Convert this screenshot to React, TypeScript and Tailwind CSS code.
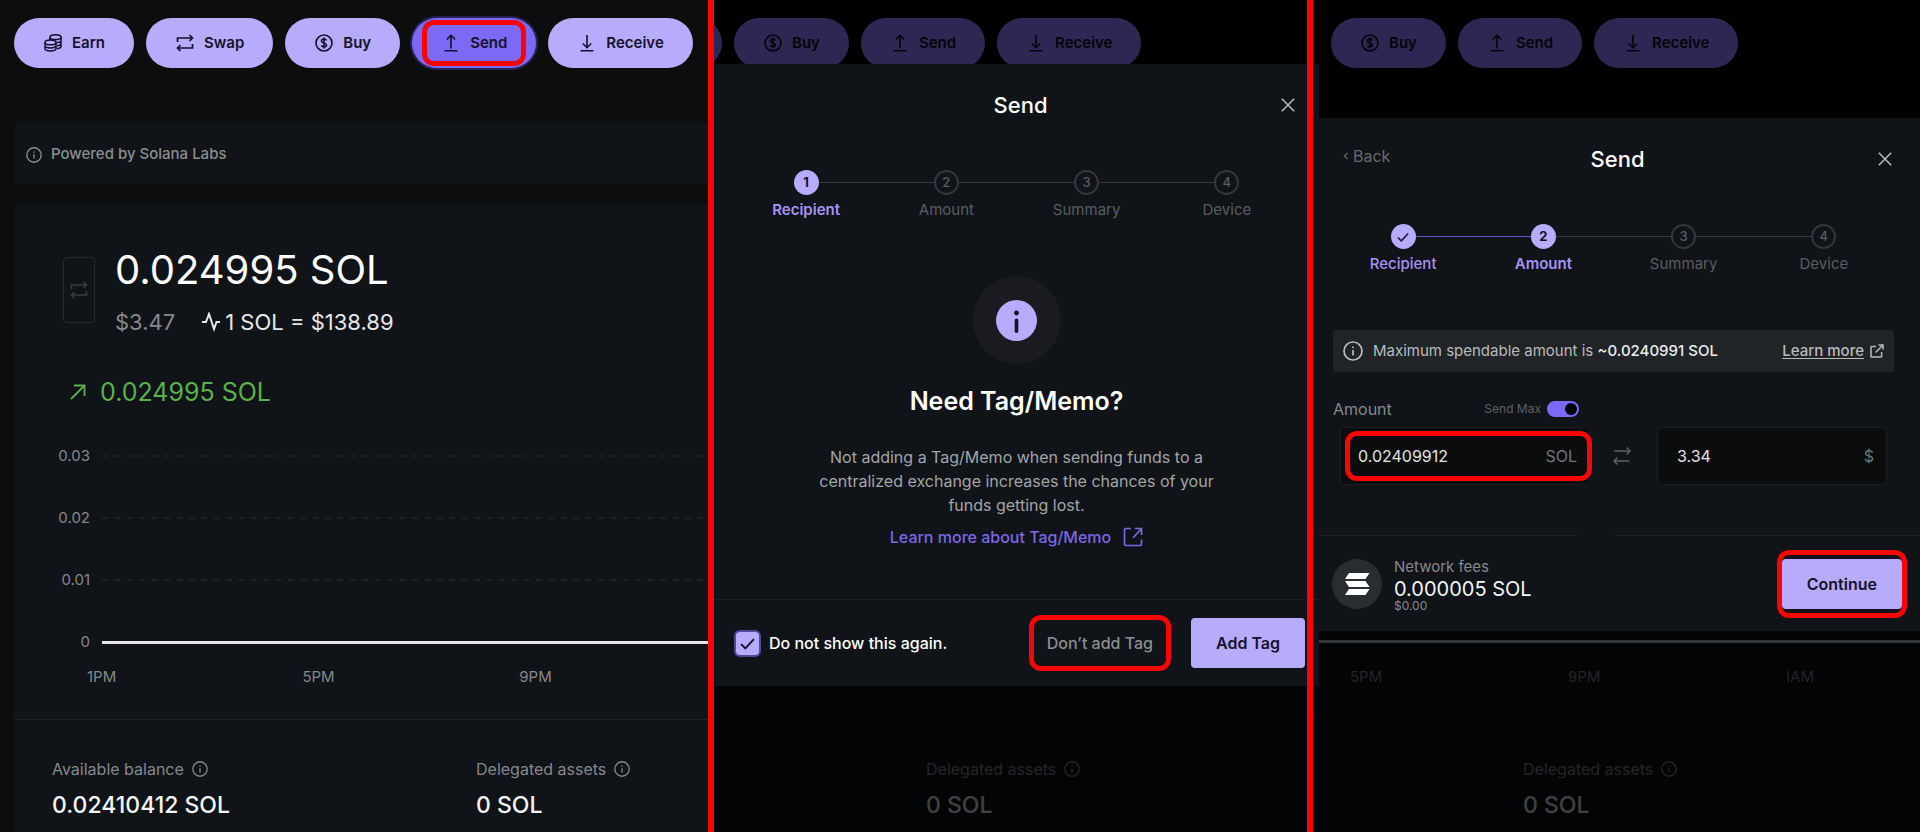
import { useState } from "react";

type IconProps = { className?: string };

const EarnIcon = ({ className }: IconProps) => (
    <svg viewBox="0 0 20 20" fill="none" stroke="currentColor" strokeWidth="1.5" className={className}>
        <ellipse cx="12.5" cy="4.2" rx="5.5" ry="2.4" />
        <path d="M7 4.2v3M18 4.2v9c0 1.3-1.6 2.2-4 2.4M18 7.4c0 1.2-1.6 2-4 2.2M18 10.5c0 1.2-1.6 2-4 2.2" />
        <ellipse cx="7.5" cy="9.4" rx="5.5" ry="2.4" />
        <path d="M2 9.4v6.2C2 17 4.5 18 7.5 18s5.5-1 5.5-2.4V9.4M2 12.5c0 1.4 2.5 2.4 5.5 2.4s5.5-1 5.5-2.4" />
    </svg>
);

const SwapIcon = ({ className }: IconProps) => (
    <svg viewBox="0 0 20 20" fill="none" stroke="currentColor" strokeWidth="1.7" className={className}>
        <path d="M2.5 9V5h15M14.5 2l3 3-3 3M17.5 11v4h-15M5.5 12l-3 3 3 3" />
    </svg>
);

const BuyIcon = ({ className }: IconProps) => (
    <svg viewBox="0 0 20 20" fill="none" stroke="currentColor" strokeWidth="1.6" className={className}>
        <circle cx="10" cy="10" r="8" />
        <path d="M12.5 7.5c-.4-1-1.3-1.5-2.5-1.5-1.5 0-2.5.8-2.5 1.9 0 2.8 5 1.4 5 4.2 0 1.1-1 1.9-2.5 1.9-1.3 0-2.2-.6-2.6-1.6M10 4.6v10.8" />
    </svg>
);

const SendIcon = ({ className }: IconProps) => (
    <svg viewBox="0 0 20 20" fill="none" stroke="currentColor" strokeWidth="1.6" className={className}>
        <path d="M10 15.5v-13M5.8 6.5L10 2.3l4.2 4.2M3.5 17.8h13" />
    </svg>
);

const ReceiveIcon = ({ className }: IconProps) => (
    <svg viewBox="0 0 20 20" fill="none" stroke="currentColor" strokeWidth="1.6" className={className}>
        <path d="M10 2v12.5M5.8 10.5l4.2 4.2 4.2-4.2M3.5 17.8h13" />
    </svg>
);

const InfoIcon = ({ className }: IconProps) => (
    <svg viewBox="0 0 20 20" fill="none" stroke="currentColor" strokeWidth="1.7" className={className}>
        <circle cx="10" cy="10" r="9" />
        <path d="M10 9v5.5M10 5.5v1.8" />
    </svg>
);

const CloseIcon = ({ className }: IconProps) => (
    <svg viewBox="0 0 14 14" fill="none" stroke="currentColor" strokeWidth="1.6" className={className}>
        <path d="M.8.8l12.4 12.4M13.2.8L.8 13.2" />
    </svg>
);

const CheckIcon = ({ className }: IconProps) => (
    <svg viewBox="0 0 14 14" fill="none" stroke="currentColor" strokeWidth="1.7" className={className}>
        <path d="M1 7.5l4 4L13 3" />
    </svg>
);

const ExternalIcon = ({ className }: IconProps) => (
    <svg viewBox="0 0 20 20" fill="none" stroke="currentColor" strokeWidth="1.7" className={className}>
        <path d="M8 1.5H3A1.5 1.5 0 0 0 1.5 3v14A1.5 1.5 0 0 0 3 18.5h14a1.5 1.5 0 0 0 1.5-1.5v-4.5M12 1.5h6.5V8M18.5 1.5L10 11" />
    </svg>
);

const OpenIcon = ({ className }: IconProps) => (
    <svg viewBox="0 0 14 14" fill="none" stroke="currentColor" strokeWidth="1.5" className={className}>
        <path d="M6 2.5H1.8A.8.8 0 0 0 1 3.3v9c0 .4.4.8.8.8h9c.4 0 .8-.4.8-.8V8M8.5 1H13v4.5M13 1L5.5 8.5" />
    </svg>
);

const actions = [
    { label: "Earn", Icon: EarnIcon },
    { label: "Swap", Icon: SwapIcon },
    { label: "Buy", Icon: BuyIcon },
    { label: "Send", Icon: SendIcon },
    { label: "Receive", Icon: ReceiveIcon },
];

// Red frame around the control the user has to click
const Highlight = ({ className }: IconProps) => (
    <span className={`pointer-events-none absolute rounded-xl border-[5px] border-[#f80505] ${className}`} />
);

type ActionBarProps = { items: typeof actions; active?: string; dimmed?: boolean };

function ActionBar({ items, active, dimmed }: ActionBarProps) {
    return (
        <nav className="flex h-[50px] shrink-0 gap-3">
            {items.map(({ label, Icon }) => (
                <button
                    key={label}
                    className={`relative flex shrink-0 items-center gap-[9px] rounded-full px-[29px] text-[15px] font-semibold ${
                        dimmed
                            ? "bg-[#2f2753] text-[#050409]"
                            : active === label
                              ? "bg-[#7c6af6] text-[#15112b] ring-2 ring-[#2a2358]"
                              : "bg-[#b7abfd] text-[#15112b]"
                    }`}
                >
                    <Icon className="size-5" />
                    {label}
                    {active === label && <Highlight className="inset-x-2.5 inset-y-0.5" />}
                </button>
            ))}
        </nav>
    );
}

type BalanceProps = { label: string; value: string };

function Balance({ label, value }: BalanceProps) {
    return (
        <div>
            <div className="flex h-6 items-center gap-2 text-base text-[#85888c]">
                {label}
                <InfoIcon className="size-4" />
            </div>
            <div className="mt-2 text-[23px] leading-8 font-medium text-[#f2f3f4]">{value}</div>
        </div>
    );
}

type StepperProps = { current: number };

function Stepper({ current }: StepperProps) {
    const steps = ["Recipient", "Amount", "Summary", "Device"];

    return (
        <ol className="grid grid-cols-4">
            {steps.map((step, i) => {
                const reached = i + 1 <= current;
                return (
                    <li key={step} className="flex flex-col items-center gap-[5px]">
                        <div className="flex w-full items-center">
                            <span
                                className={`h-px flex-1 ${
                                    i === 0 ? "bg-transparent" : reached ? "bg-[#6a57c8]" : "bg-[#36393c]"
                                }`}
                            />
                            <span
                                className={`flex size-[25px] items-center justify-center rounded-full text-[13px] ${
                                    reached
                                        ? "bg-[#b7abfd] font-bold text-[#15112b]"
                                        : "border-2 border-[#34373a] font-medium text-[#5a5d60]"
                                }`}
                            >
                                {i + 1 < current ? <CheckIcon className="size-3" /> : i + 1}
                            </span>
                            <span
                                className={`h-px flex-1 ${
                                    i === 3 ? "bg-transparent" : i + 1 < current ? "bg-[#6a57c8]" : "bg-[#36393c]"
                                }`}
                            />
                        </div>
                        <span
                            className={`text-[15px] leading-5 ${
                                i + 1 === current
                                    ? "font-semibold text-[#a594f5]"
                                    : reached
                                      ? "font-medium text-[#a594f5]"
                                      : "text-[#5a5d60]"
                            }`}
                        >
                            {step}
                        </span>
                    </li>
                );
            })}
        </ol>
    );
}

function DialogTitle({ back }: { back?: boolean }) {
    return (
        <header className="grid h-10 grid-cols-3 items-center pr-0.5 pl-2.5">
            <div>
                {back && (
                    <button className="flex items-center gap-1 pb-1.5 text-base text-[#686b6e]">
                        <svg viewBox="0 0 6 10" fill="none" stroke="currentColor" strokeWidth="1.5" className="h-2 w-1.5">
                            <path d="M5 1L1 5l4 4" />
                        </svg>
                        Back
                    </button>
                )}
            </div>
            <h2 className="text-center text-[22px] font-medium text-white">Send</h2>
            <button aria-label="Close" className="justify-self-end text-[#b4b6b8]">
                <CloseIcon className="size-3.5" />
            </button>
        </header>
    );
}

function AccountPanel() {
    const rows = ["0.03", "0.02", "0.01"];
    const hours = ["1PM", "5PM", "9PM"];

    return (
        <section className="relative flex flex-col overflow-hidden bg-[#0c0e0d] pt-[18px] pl-3.5">
            <ActionBar items={actions} active="Send" />
            <div className="mt-[55px] flex h-[61px] items-center gap-[9px] rounded-l bg-[#101317] pt-0.5 pl-3 text-[15px] font-medium text-[#8b8e92]">
                <InfoIcon className="size-4" />
                Powered by Solana Labs
            </div>
            <div className="mt-5 flex-1 rounded-l bg-[#101317]">
                <div className="flex gap-5 pt-[42px] pl-[49px]">
                    <button
                        aria-label="Swap currency"
                        className="mt-[11px] flex h-[66px] w-8 items-center justify-center rounded border border-[#26292d] text-[#3a3d41]"
                    >
                        <SwapIcon className="size-5" />
                    </button>
                    <div>
                        <h1 className="text-[40px] leading-[48px] text-white">0.024995 SOL</h1>
                        <p className="mt-3 flex items-center text-[22px] leading-8 text-[#e6e7e9]">
                            <span className="text-[#85888e]">$3.47</span>
                            <svg
                                viewBox="0 0 20 20"
                                fill="none"
                                stroke="currentColor"
                                strokeWidth="2"
                                className="mr-1 ml-[26px] size-5"
                            >
                                <path d="M1 10h4l3-8 5 15 2.500-7H19" />
                            </svg>
                            1 SOL = $138.89
                        </p>
                    </div>
                </div>
                <p className="mt-[38px] flex items-center gap-3.5 pl-[56px] text-[25px] leading-8 text-[#5cb04c]">
                    <svg viewBox="0 0 16 16" fill="none" stroke="currentColor" strokeWidth="1.8" className="size-4">
                        <path d="M1 15L14 2M4 1.500h10.500V12" />
                    </svg>
                    0.024995 SOL
                </p>
                <div className="mt-[17px] flex flex-col text-[15px] text-[#85888c]">
                    {rows.map((row) => (
                        <div key={row} className="flex h-[62px] items-center">
                            <span className="w-[76px] text-right">{row}</span>
                            <svg className="ml-3 h-0.5 flex-1">
                                <path d="M0 1h900" stroke="#202428" strokeWidth="1.5" strokeDasharray="6 6.4" />
                            </svg>
                        </div>
                    ))}
                    <div className="flex h-[62px] items-center">
                        <span className="w-[76px] text-right">0</span>
                        <span className="ml-3 h-[3px] flex-1 bg-[#e8e8ea]" />
                    </div>
                    <div className="-mt-2 flex h-6 items-center">
                        {hours.map((hour, i) => (
                            <span key={hour} className={i === 0 ? "w-[196px] pl-[73px]" : "w-[217px] text-center"}>
                                {hour}
                            </span>
                        ))}
                    </div>
                </div>
                <div className="mt-[30px] grid grid-cols-[424px_1fr] border-t border-[#202327] pt-[37px] pl-[38px]">
                    <Balance label="Available balance" value="0.02410412 SOL" />
                    <Balance label="Delegated assets" value="0 SOL" />
                </div>
            </div>
            <div className="absolute inset-y-0 right-0 w-1.5 bg-[#fb0404]" />
        </section>
    );
}

function MemoPanel() {
    const [hide, setHide] = useState(true);

    return (
        <section className="relative flex flex-col overflow-hidden bg-black">
            <div className="flex h-16 shrink-0 gap-3 overflow-hidden pt-[18px]">
                {/* end of the button that is scrolled out of view */}
                <div className="flex h-[50px] w-2 justify-end overflow-hidden">
                    <span className="w-24 shrink-0 rounded-full bg-[#2f2753]" />
                </div>
                <ActionBar items={actions.slice(2)} dimmed />
            </div>
            <div className="flex flex-col bg-[#101317] pt-[21px]">
                <div className="px-[22px]">
                    <DialogTitle />
                    <div className="mt-[45px]">
                        <Stepper current={1} />
                    </div>
                    <div className="mt-14 flex flex-col items-center text-center">
                        <div className="flex size-[88px] items-center justify-center rounded-full bg-[#191b20]">
                            <svg viewBox="0 0 41 41" className="size-[41px]">
                                <circle cx="20.5" cy="20.5" r="20.5" fill="#b7abfd" />
                                <circle cx="20.5" cy="13" r="2.4" fill="#15112b" />
                                <rect x="18.7" y="18.5" width="3.6" height="14.5" rx="1.8" fill="#15112b" />
                            </svg>
                        </div>
                        <h3 className="mt-[21px] text-[25px] leading-8 font-semibold text-white">Need Tag/Memo?</h3>
                        <p className="mt-7 w-[420px] text-base leading-6 text-[#a3a5a8]">
                            Not adding a Tag/Memo when sending funds to a centralized exchange increases the chances of
                            your funds getting lost.
                        </p>
                        <a href="#memo" className="mt-2 flex items-center gap-3 text-base font-medium text-[#7c68e6]">
                            Learn more about Tag/Memo
                            <ExternalIcon className="size-5" />
                        </a>
                    </div>
                </div>
                <div className="mt-[50px] flex h-[87px] items-center justify-between border-t border-[#1d2023] pr-[14px] pl-[22px]">
                    <label className="flex items-center gap-2.5 text-base font-medium text-white">
                        <span className="relative flex size-[23px]">
                            <input
                                type="checkbox"
                                checked={hide}
                                onChange={(e) => setHide(e.target.checked)}
                                className="size-full appearance-none rounded bg-[#b7abfd] ring-2 ring-[#54479a]"
                            />
                            {hide && (
                                <CheckIcon className="pointer-events-none absolute inset-1 size-[15px] text-[#15112b]" />
                            )}
                        </span>
                        Do not show this again.
                    </label>
                    <div className="flex items-center gap-[38px]">
                        <button className="relative h-12 text-base font-medium text-[#8b8e92]">
                            Don’t add Tag
                            <Highlight className="-inset-x-[18px] -inset-y-1" />
                        </button>
                        <button className="h-[50px] rounded bg-[#b7abfd] px-[25px] text-base font-semibold text-[#15112b]">
                            Add Tag
                        </button>
                    </div>
                </div>
            </div>
            <div className="flex-1 bg-[#030405] pt-[33px]">
                <div className="border-t border-[#08090b] pt-[37px] pl-[212px]">
                    <div className="opacity-25">
                        <Balance label="Delegated assets" value="0 SOL" />
                    </div>
                </div>
            </div>
            <div className="absolute inset-y-0 right-1.5 w-1.5 bg-[#fb0404]" />
        </section>
    );
}

function AmountPanel() {
    const [amount, setAmount] = useState("0.02409912");
    const [fiat, setFiat] = useState("3.34");
    const [sendMax, setSendMax] = useState(true);

    return (
        <section className="flex flex-col overflow-hidden bg-black">
            <div className="h-[118px] shrink-0 pt-[18px] pl-3">
                <ActionBar items={actions.slice(2)} dimmed />
            </div>
            <div className="flex flex-col bg-[#101317] pt-[21px]">
                <div className="pr-[26px] pl-[14px]">
                    <DialogTitle back />
                    <div className="mt-[45px]">
                        <Stepper current={2} />
                    </div>
                    <div className="mt-14 flex h-[42px] items-center rounded bg-[#202427] px-2.5 text-[15px] text-[#b9bbbd]">
                        <InfoIcon className="mr-2.5 size-5" />
                        <span>
                            Maximum spendable amount is <span className="font-medium text-[#ececee]">~0.0240991 SOL</span>
                        </span>
                        <a href="#max" className="ml-auto flex items-center gap-1.5 font-medium">
                            <span className="underline underline-offset-2">Learn more</span>
                            <OpenIcon className="size-3.5" />
                        </a>
                    </div>
                    <div className="mt-[25px] flex h-6 w-[246px] items-center">
                        <label htmlFor="amount" className="text-base text-[#85888c]">
                            Amount
                        </label>
                        <label className="ml-auto flex items-center gap-1.5 text-xs text-[#5d6063]">
                            Send Max
                            <span className="relative flex h-4 w-8">
                                <input
                                    type="checkbox"
                                    role="switch"
                                    checked={sendMax}
                                    onChange={(e) => setSendMax(e.target.checked)}
                                    className="peer size-full appearance-none rounded-full bg-[#33363a] checked:bg-[#7c6af6]"
                                />
                                <span className="pointer-events-none absolute top-0.5 left-0.5 size-3 rounded-full bg-black peer-checked:left-[18px]" />
                            </span>
                        </label>
                    </div>
                    <div className="mt-1.5 flex h-[58px] items-center px-[7px]">
                        <div className="relative flex h-full w-[250px] items-center rounded border border-[#1a1d21] bg-[#0b0d0c] pr-3 pl-[17px] text-base">
                            <input
                                id="amount"
                                value={amount}
                                onChange={(e) => setAmount(e.target.value)}
                                className="min-w-0 flex-1 text-[#e2e3e4] outline-none"
                            />
                            <span className="text-[#72757a]">SOL</span>
                            <Highlight className="-right-[3px] inset-y-[3px] left-1" />
                        </div>
                        <div className="flex flex-1 justify-center pr-1 text-[#5d6063]">
                            <svg viewBox="0 0 18 20" fill="none" stroke="currentColor" strokeWidth="1.5" className="h-5 w-[18px]">
                                <path d="M1.500 5h15.500M13.500 1.500L17 5l-3.500 3.500M16.500 15H1M4.500 11.500L1 15l3.500 3.500" />
                            </svg>
                        </div>
                        <div className="flex h-full w-[230px] items-center rounded border border-[#1a1d21] bg-[#0b0d0c] pr-3 pl-[19px] text-base">
                            <input
                                aria-label="Amount in dollars"
                                value={fiat}
                                onChange={(e) => setFiat(e.target.value)}
                                className="min-w-0 flex-1 text-[#e2e3e4] outline-none"
                            />
                            <span className="text-[#72757a]">$</span>
                        </div>
                    </div>
                </div>
                <div className="mt-[50px] flex gap-[38px]">
                    <span className="h-px w-[258px] bg-[#212427]" />
                    <span className="h-px flex-1 bg-[#212427]" />
                </div>
                <div className="flex h-[95px] items-center gap-3 pr-[18px] pl-[13px]">
                    <div className="flex size-[50px] items-center justify-center rounded-full bg-[#292c30]">
                        <svg viewBox="0 0 26 24" fill="white" className="h-6 w-[26px]">
                            <path d="M5 1h20.500l-4 6H1zM1 9h20.500l4 6H5zM5 17h20.500l-4 6H1z" />
                        </svg>
                    </div>
                    <div className="text-[#85888c]">
                        <div className="text-[15px] leading-5">Network fees</div>
                        <div className="text-[20px] leading-6 text-[#f2f3f4]">0.000005 SOL</div>
                        <div className="text-xs leading-[10px]">$0.00</div>
                    </div>
                    <button className="relative ml-auto h-[50px] rounded bg-[#b7abfd] px-[25px] text-base font-semibold text-[#15112b]">
                        Continue
                        <Highlight className="-inset-x-[5px] -inset-y-[9px]" />
                    </button>
                </div>
            </div>
            <div className="flex flex-1 flex-col bg-[#030405] pt-[9px]">
                <div className="h-[3px] bg-[#34373b]" />
                <div className="mt-[22px] flex h-6 items-center justify-between pr-[106px] pl-[31px] text-[15px] text-[#222528]">
                    <span>5PM</span>
                    <span>9PM</span>
                    <span>IAM</span>
                </div>
                <div className="mt-[30px] border-t border-[#08090b] pt-[37px] pl-[204px]">
                    <div className="opacity-25">
                        <Balance label="Delegated assets" value="0 SOL" />
                    </div>
                </div>
            </div>
        </section>
    );
}

export default function App() {
    return (
        <main className="grid min-h-screen grid-cols-[714fr_605fr_601fr] font-['Inter',sans-serif]">
            <AccountPanel />
            <MemoPanel />
            <AmountPanel />
        </main>
    );
}
